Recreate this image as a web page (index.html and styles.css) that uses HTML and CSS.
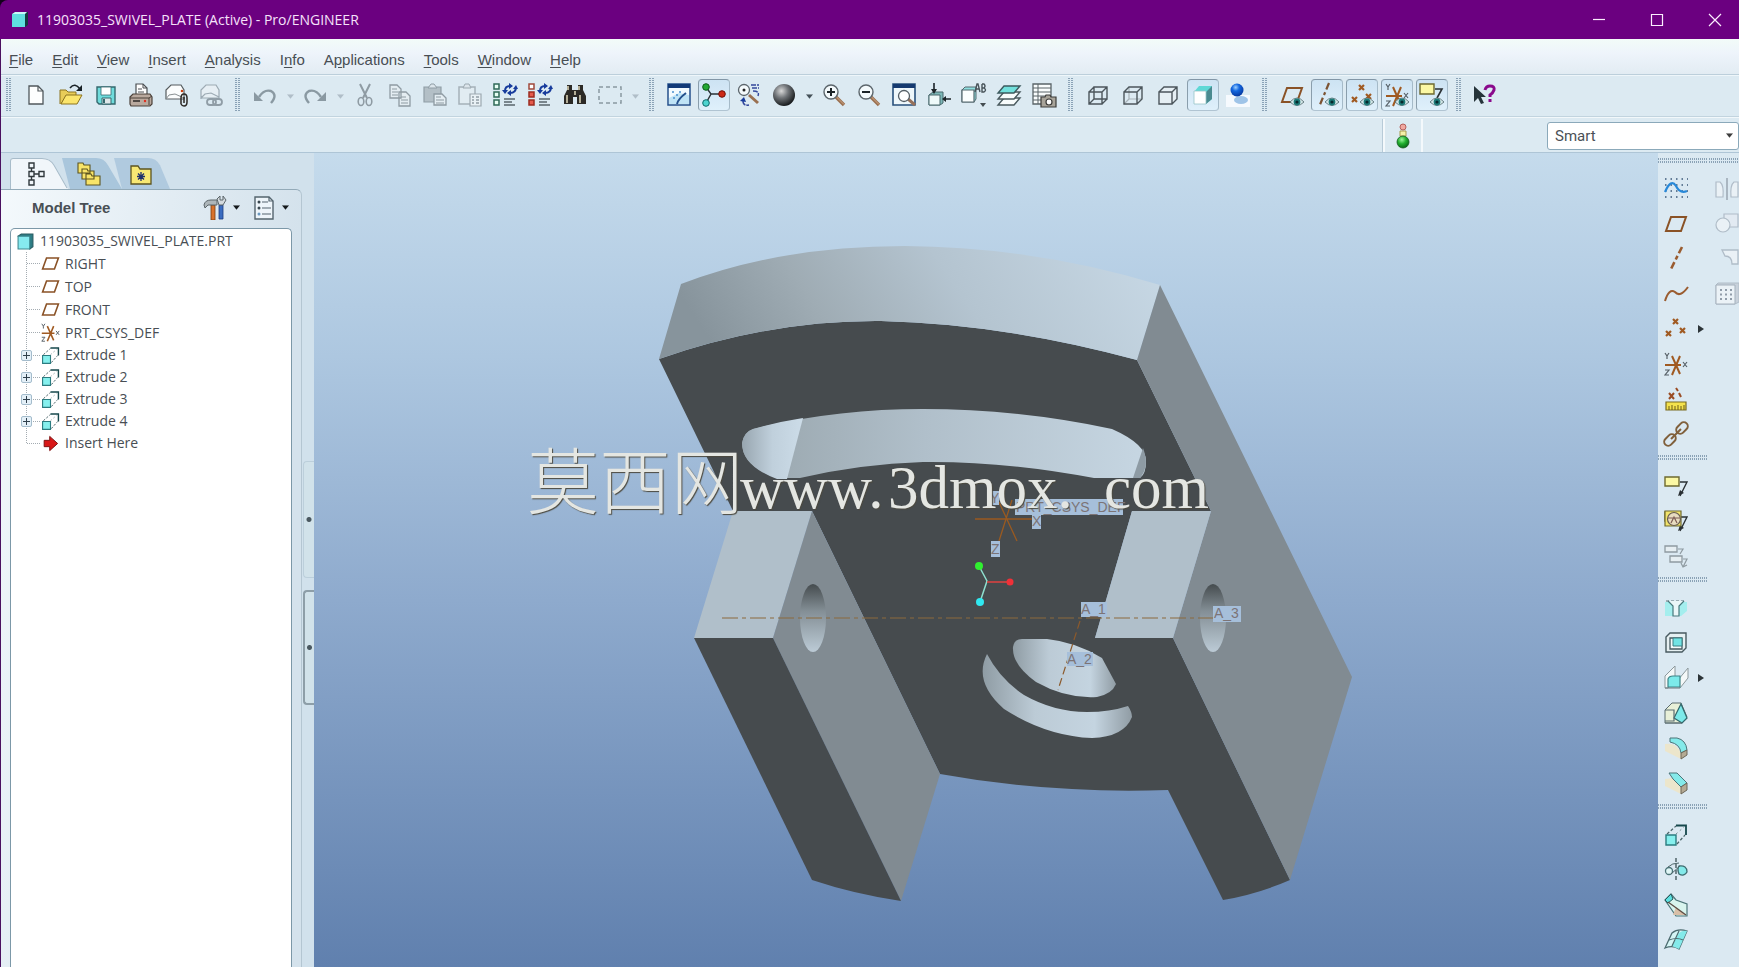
FILE: index.html
```html
<!DOCTYPE html>
<html lang="en">
<head>
<meta charset="utf-8">
<title>11903035_SWIVEL_PLATE (Active) - Pro/ENGINEER</title>
<link rel="stylesheet" href="styles.css">
</head>
<body>
<svg class="defs" aria-hidden="true">
  <defs>
    <radialGradient id="ball" cx=".38" cy=".32" r=".7"><stop offset="0" stop-color="#d8d8d8"/><stop offset=".45" stop-color="#707478"/><stop offset="1" stop-color="#15181a"/></radialGradient>
    <radialGradient id="blueball" cx=".4" cy=".3" r=".7"><stop offset="0" stop-color="#9cd0ff"/><stop offset=".4" stop-color="#1468e0"/><stop offset="1" stop-color="#0538a0"/></radialGradient>
    <radialGradient id="greenball" cx=".4" cy=".3" r=".7"><stop offset="0" stop-color="#9af79a"/><stop offset=".5" stop-color="#22b030"/><stop offset="1" stop-color="#0a6a18"/></radialGradient>
  </defs>
  <symbol id="eye" viewBox="0 0 14 10"><path d="M0 5Q7-3 14 5Q7 12 0 5Z" fill="#d6e8ea" stroke="#4c6468" stroke-width=".8"/><circle cx="7" cy="5" r="3.4" fill="#1c7a78"/><circle cx="7" cy="5" r="1.6" fill="#06282c"/></symbol>
  <symbol id="plane" viewBox="0 0 24 24"><path d="M7 5H22L17 19H2Z" fill="none" stroke="#8a5226" stroke-width="2"/></symbol>
  <symbol id="csys" viewBox="0 0 24 24"><path d="M1 13H17M8 23L16 4M8 4L16 22" stroke="#a05a22" stroke-width="2" fill="none"/><path d="M1 1L3 4L5 1M3 4V7M19 10L23 15M23 10L19 15M1 18H5L1 23H5" stroke="#555f66" stroke-width="1.2" fill="none"/></symbol>
  <symbol id="points" viewBox="0 0 24 24"><path d="M9 2L14 7M14 2L9 7M2 14L7 19M7 14L2 19M16 11L21 16M21 11L16 16" stroke="#a05a22" stroke-width="2.2" fill="none"/></symbol>
  <symbol id="extrude" viewBox="0 0 24 24"><path d="M2 12H12V22H2Z" fill="#86f0ee" stroke="#2b7c80" stroke-width="1.4"/><path d="M3 11L12 3M13 21L21 12" stroke="#4a6468" stroke-width="1.2" stroke-dasharray="3 2" fill="none"/><path d="M12 11L20 4" stroke="#7a9094" stroke-dasharray="2 3"/><path d="M12 2.500H22V12" fill="none" stroke="#16484c" stroke-width="1.8"/></symbol>
  <symbol id="caret" viewBox="0 0 10 6"><path d="M1 0H9L5 5Z" fill="currentColor"/></symbol>
  <symbol id="lens" viewBox="0 0 24 24"><path d="M14 14L22 22" stroke="#9a7050" stroke-width="3.4"/><path d="M14.500 14L22 21.500" stroke="#d2a888" stroke-width="1"/><circle cx="9" cy="9" r="7" fill="#f4fafc" stroke="#5c666c" stroke-width="1.4"/></symbol>
  <symbol id="note" viewBox="0 0 24 24"><path d="M1 3H15V12H1Z" fill="#fbf8a4" stroke="#6e6a30" stroke-width="1.4"/><path d="M16 8H23L16 22" fill="none" stroke="#2a3034" stroke-width="1.400"/><path d="M14 22L16 16L20 19Z" fill="#2a3034"/></symbol>
</svg>

<header class="titlebar">
  <svg class="app-icon" viewBox="0 0 16 16"><path d="M0 2L3 0H16V13L13 15H0Z" fill="#123c40"/><path d="M0 2L3 0H15L13 2Z" fill="#c8fafa"/><path d="M0 2H13V15H0Z" fill="#5fdfe0"/></svg>
  <h1 class="title">11903035_SWIVEL_PLATE (Active) - Pro/ENGINEER</h1>
  <div class="window-controls">
    <button aria-label="Minimize"><svg viewBox="0 0 12 12"><path d="M0 5.500H12"/></svg></button>
    <button aria-label="Maximize"><svg viewBox="0 0 12 12"><path d="M.5 .5H11.500V11.500H.5Z"/></svg></button>
    <button aria-label="Close"><svg viewBox="0 0 12 12"><path d="M0 0L12 12M12 0L0 12"/></svg></button>
  </div>
</header>

<div class="app">
<nav class="menubar" aria-label="Main menu">
  <button><u>F</u>ile</button><button><u>E</u>dit</button><button><u>V</u>iew</button><button><u>I</u>nsert</button><button><u>A</u>nalysis</button><button>I<u>n</u>fo</button><button>A<u>p</u>plications</button><button><u>T</u>ools</button><button><u>W</u>indow</button><button><u>H</u>elp</button>
</nav>

<div class="toolbar" role="toolbar" aria-label="Standard">
  <span class="grip first"></span>
  <div class="group">
    <button class="tool" aria-label="New"><svg viewBox="0 0 24 24"><path d="M5 3H14L19 8V21H5Z" fill="#fdfefe" stroke="#50585c" stroke-width="1.300"/><path d="M14 3V8H19" fill="none" stroke="#50585c" stroke-width="1.200"/></svg></button>
    <button class="tool" aria-label="Open"><svg viewBox="0 0 24 24"><path d="M1 21V7H7L9 9H17V13H7L2 21" fill="#e8cc58" stroke="#8d7420"/><path d="M2 21L7 12H23L18 21Z" fill="#fbe56c" stroke="#8d7420"/><path d="M11 5Q16-1 21 6" fill="none" stroke="#1a2226" stroke-width="1.600"/><path d="M23 2V8H17Z" fill="#1a2226"/></svg></button>
    <button class="tool" aria-label="Save"><svg viewBox="0 0 24 24"><path d="M3 4H21V21H5L3 19Z" fill="#6fdcdc" stroke="#35686e" stroke-width="1.400"/><path d="M7 4H17V12H7Z" fill="#fff" stroke="#35686e" stroke-width=".8"/><path d="M8 15H17V21H8Z" fill="#dfe8ea" stroke="#35686e"/><path d="M10 16V20" stroke="#35686e" stroke-width="2"/></svg></button>
    <button class="tool" aria-label="Print"><svg viewBox="0 0 24 24"><path d="M7 12V1H14L18 5V12" fill="#fff" stroke="#4a4f52" stroke-width="1.200"/><path d="M14 1V5H18M9 6H13M9 9H15" stroke="#4a4f52" fill="none"/><path d="M1 14L4 11H21L23 14V21L21 23H2L1 21Z" fill="#b9a99e" stroke="#4b4039" stroke-width="1.200"/><path d="M1 15H20V22M20 15L23 13" stroke="#4b4039" fill="none"/><path d="M4 18H11" stroke="#2e2a27" stroke-width="1.500"/><circle cx="16" cy="18" r="1.200" fill="#e03020"/></svg></button>
    <button class="tool" aria-label="Send attachment"><svg viewBox="0 0 24 24"><path d="M2 16V7L7 2H17L20 7V16Z" fill="#fbfdfd" stroke="#555b5e" stroke-width="1.200"/><path d="M2 16L5 12L11 11L20 15" fill="none" stroke="#888f92"/><circle cx="18" cy="8" r="1.300" fill="#d04010"/><path d="M17 21V15Q17 11 20 11Q23 11 23 15V19Q23 23 20 23Q18 23 17 21M20 14V20" fill="none" stroke="#2c2824" stroke-width="1.500"/></svg></button>
    <button class="tool off" aria-label="Send link"><svg viewBox="0 0 24 24"><path d="M2 16V7L7 2H17L20 7V15H2M2 15L6 11L12 10L20 14" fill="#eaf1f5" stroke="#8e9ba4" stroke-width="1.200"/><rect x="8" y="16" width="9" height="6" rx="3" fill="none" stroke="#7e8b94" stroke-width="1.800"/><rect x="14" y="16" width="9" height="6" rx="3" fill="none" stroke="#7e8b94" stroke-width="1.800"/></svg></button>
  </div>
  <span class="grip"></span>
  <div class="group">
    <button class="tool off" aria-label="Undo"><svg viewBox="0 0 24 24"><path d="M6 14Q11 6 18 8Q25 12 18 20" fill="none" stroke="#76868f" stroke-width="2.400"/><path d="M1 9V18H10Z" fill="#76868f"/></svg></button>
    <button class="drop off" aria-label="Undo list"><svg viewBox="0 0 10 6"><use href="#caret"/></svg></button>
    <button class="tool off" aria-label="Redo"><svg viewBox="0 0 24 24"><path d="M18 14Q13 6 6 8Q-1 12 6 20" fill="none" stroke="#76868f" stroke-width="2.400"/><path d="M23 9V18H14Z" fill="#76868f"/></svg></button>
    <button class="drop off" aria-label="Redo list"><svg viewBox="0 0 10 6"><use href="#caret"/></svg></button>
    <button class="tool off" aria-label="Cut"><svg viewBox="0 0 24 24"><path d="M7 1L14 15M17 1L10 15" stroke="#7c8890" stroke-width="2"/><ellipse cx="8" cy="18.500" rx="2.800" ry="4" fill="none" stroke="#7c8890" stroke-width="1.600"/><ellipse cx="16" cy="18.500" rx="2.800" ry="4" fill="none" stroke="#7c8890" stroke-width="1.600"/></svg></button>
    <button class="tool off" aria-label="Copy"><svg viewBox="0 0 24 24"><path d="M2 2H9L13 6V15H2ZM11 9H18L22 13V23H11Z" fill="#e6eef2" stroke="#7c8890" stroke-width="1.300"/><path d="M4 6H9M4 9H10M4 12H10M13 14H18M13 17H20M13 20H20" stroke="#7c8890"/></svg></button>
    <button class="tool off" aria-label="Paste"><svg viewBox="0 0 24 24"><path d="M1 4H18V19H1Z" fill="#a9b5bc" stroke="#7f8c94" stroke-width="1.200"/><path d="M5 5L8 1H11L14 5Z" fill="#dce5ea" stroke="#7f8c94"/><path d="M11 11H19L23 15V22H11Z" fill="#e6eef2" stroke="#7c8890" stroke-width="1.300"/><path d="M13 14H18M13 17H21M13 20H21" stroke="#7c8890"/></svg></button>
    <button class="tool off" aria-label="Paste special"><svg viewBox="0 0 24 24"><path d="M1 4H17V21H1Z" fill="#e3edf2" stroke="#98a4ac" stroke-width="1.500"/><path d="M5 5L7 1H11L13 5Z" fill="#dce5ea" stroke="#8d99a1"/><path d="M12 11H23V23H12Z" fill="#edf3f6" stroke="#8d99a1" stroke-width="1.200"/><path d="M14 14H16M14 17H16M14 20H16M18 14H21M18 17H21M18 20H21" stroke="#7f8c94" stroke-width="1.400"/></svg></button>
    <button class="tool" aria-label="Regenerate"><svg viewBox="0 0 24 24"><path d="M1 1H6V6H1ZM1 9H6V14H1ZM1 17H6V22H1Z" fill="#e8fff4" stroke="#2f6a58" stroke-width="1.500"/><path d="M12 8Q12 3 17 3M23 4Q23 10 17 10" fill="none" stroke="#173b9c" stroke-width="2"/><path d="M16 0V6L20 3ZM18 7V13L14 10Z" fill="#173b9c"/><path d="M9 7L12 11L15 7ZM20 6L23 2L25 6Z" fill="#173b9c"/><path d="M11 16H22M11 19H19M11 22H22" stroke="#5a666c" stroke-width="1.300"/></svg></button>
    <button class="tool" aria-label="Regenerate manager"><svg viewBox="0 0 24 24"><path d="M1 1H6V6H1Z" fill="#fff" stroke="#a04a3c" stroke-width="1.500"/><path d="M1 9H6V14H1ZM1 17H6V22H1Z" fill="#e65a4c" stroke="#9c2c20" stroke-width="1.500"/><path d="M12 8Q12 3 17 3M23 4Q23 10 17 10" fill="none" stroke="#173b9c" stroke-width="2"/><path d="M16 0V6L20 3ZM18 7V13L14 10Z" fill="#173b9c"/><path d="M9 7L12 11L15 7ZM20 6L23 2L25 6Z" fill="#173b9c"/><path d="M11 16H22M11 19H19M11 22H22" stroke="#5a666c" stroke-width="1.300"/></svg></button>
    <button class="tool" aria-label="Find"><svg viewBox="0 0 24 24"><path d="M4 2H9V7H15V2H20V7L23 13V21H14V14H10V21H1V13L4 7Z" fill="#2c2a26"/><path d="M5 3V7M16 3V7M4 12V20M17 12V20M12 8V12" stroke="#d8d0b4" stroke-width="1.600"/></svg></button>
    <button class="tool off" aria-label="Select box"><svg viewBox="0 0 24 24"><path d="M1 4H23V20H1Z" fill="none" stroke="#74848c" stroke-width="1.500" stroke-dasharray="4 3"/></svg></button>
    <button class="drop off" aria-label="Select options"><svg viewBox="0 0 10 6"><use href="#caret"/></svg></button>
  </div>
  <span class="grip"></span>
  <div class="group">
    <button class="tool" aria-label="Repaint"><svg viewBox="0 0 24 24"><path d="M1 1H23V22H1Z" fill="#f2faff" stroke="#24508c" stroke-width="1.500"/><path d="M1 1H23V5H1Z" fill="#123a78"/><path d="M2 21V15L12 10L22 12V21Z" fill="#bfe3f6"/><path d="M5 9H7M9 12H11M6 15H8M12 9H14" stroke="#4a90d0" stroke-width="1.500"/><path d="M10 21Q11 16 19 10" stroke="#24508c" stroke-width="2" fill="none"/></svg></button>
    <button class="tool on" aria-label="Spin center" aria-pressed="true"><svg viewBox="0 0 24 24"><path d="M4 4L9 11L4 20M9 11H20" fill="none" stroke="#2a3236" stroke-width="1.400"/><circle cx="4" cy="4" r="3.300" fill="#22a834" stroke="#0c5c1a"/><circle cx="20" cy="11" r="3.300" fill="#cc2a18" stroke="#701008"/><circle cx="4" cy="20" r="3.300" fill="#4cd4d0" stroke="#0c6a6c"/></svg></button>
    <button class="tool" aria-label="Orient mode"><svg viewBox="0 0 24 24"><path d="M12 12L21 20" stroke="#9a7050" stroke-width="3"/><circle cx="7" cy="7" r="5.500" fill="#f4fafc" stroke="#5c666c" stroke-width="1.300"/><circle cx="7" cy="7" r="1.500" fill="#222"/><path d="M14 2H22M15 5H22M16 8Q23 8 21 13M6 18Q6 23 12 22" stroke="#34489c" stroke-width="1.500" fill="none" stroke-dasharray="5 1"/><path d="M3 18L7 14L9 19Z" fill="#173b9c"/></svg></button>
    <button class="tool" aria-label="Appearance"><svg viewBox="0 0 24 24"><circle cx="12" cy="12" r="11" fill="url(#ball)"/></svg></button>
    <button class="drop" aria-label="Appearance gallery"><svg viewBox="0 0 10 6"><use href="#caret"/></svg></button>
    <button class="tool" aria-label="Zoom in"><svg viewBox="0 0 24 24"><use href="#lens"/><path d="M5 9H13M9 5V13" stroke="#1c2428" stroke-width="2"/></svg></button>
    <button class="tool" aria-label="Zoom out"><svg viewBox="0 0 24 24"><use href="#lens"/><path d="M5 9H13" stroke="#1c2428" stroke-width="2"/></svg></button>
    <button class="tool" aria-label="Refit"><svg viewBox="0 0 24 24"><path d="M1 1H23V22H1Z" fill="#eef7fb" stroke="#28507c" stroke-width="1.600"/><path d="M1 1H23V5H1Z" fill="#153a70"/><path d="M16 16L23 22" stroke="#96705a" stroke-width="3"/><circle cx="12" cy="13" r="5.500" fill="#fff" stroke="#555f66" stroke-width="1.300"/></svg></button>
    <button class="tool" aria-label="Reorient"><svg viewBox="0 0 24 24"><path d="M2 12L6 9H16V20L13 22H2Z" fill="#7cb8b8" stroke="#48686c"/><path d="M2 12H13V22H2Z" fill="#eefafa" stroke="#48686c"/><path d="M7 0V8M24 16H17" stroke="#1c2428" stroke-width="1.600"/><path d="M4 6H10L7 11ZM19 13V19L15 16Z" fill="#1c2428"/></svg></button>
    <button class="tool" aria-label="Saved view list"><svg viewBox="0 0 24 24"><path d="M0 7L3 4H14V16L12 19H0Z" fill="#8edede" stroke="#54686e"/><path d="M0 7H12V19H0Z" fill="#fbfefe" stroke="#54686e" stroke-width="1.200"/><path d="M13 9L15 1H16L18 9M14 6H17M20 1H22Q24 3 22 5H20V1M20 5H22Q25 7 22 9H20V5" fill="none" stroke="#48545a" stroke-width="1.400"/><path d="M18 20H24L21 24Z" fill="#444c50"/></svg></button>
    <button class="tool" aria-label="Layers"><svg viewBox="0 0 24 24"><path d="M7 15H23L17 22H1Z" fill="#f8fcfc" stroke="#4a5a5e" stroke-width="1.400"/><path d="M7 9H23L17 16H1Z" fill="#f8fcfc" stroke="#4a5a5e" stroke-width="1.400"/><path d="M7 3H23L17 10H1Z" fill="#72e0dc" stroke="#3c5a5e" stroke-width="1.400"/></svg></button>
    <button class="tool" aria-label="View manager"><svg viewBox="0 0 24 24"><path d="M1 1H19V21H1Z" fill="#fafdfd" stroke="#5a6468" stroke-width="1.300"/><path d="M6 1V21M1 5H19M1 9H19M1 13H19M1 17H19" stroke="#5a6468"/><path d="M9 14H13L14 12H18L19 14H24V24H9Z" fill="#a8a49a" stroke="#3c3c3a" stroke-width="1.200"/><circle cx="17" cy="19" r="3" fill="#fff" stroke="#3c3c3a" stroke-width="1.200"/></svg></button>
  </div>
  <span class="grip"></span>
  <div class="group">
    <button class="tool" aria-label="Wireframe"><svg viewBox="0 0 24 24"><path d="M3 9H16V21H3ZM8 4H21V16H8ZM3 9L8 4M16 9L21 4M16 21L21 16M3 21L8 16" fill="none" stroke="#4c565c" stroke-width="1.400"/></svg></button>
    <button class="tool" aria-label="Hidden line"><svg viewBox="0 0 24 24"><path d="M8 4V16H21M3 21L8 16" fill="none" stroke="#a8b2b8" stroke-width="1.200"/><path d="M3 9H16V21H3ZM3 9L8 4H21V16L16 21M16 9L21 4" fill="none" stroke="#4c565c" stroke-width="1.400"/></svg></button>
    <button class="tool" aria-label="No hidden"><svg viewBox="0 0 24 24"><path d="M3 9H16V21H3ZM3 9L8 4H21V16L16 21M16 9L21 4" fill="#e6eff4" stroke="#4c565c" stroke-width="1.400"/></svg></button>
    <button class="tool on" aria-label="Shading" aria-pressed="true"><svg viewBox="0 0 24 24"><path d="M3 9L8 3H21V16L15 21Z" fill="#5ed8d6"/><path d="M15 9L21 3V16L15 21Z" fill="#4a8a90"/><path d="M3 8H15V21H3Z" fill="#fff" stroke="#98c4c8" stroke-width=".8"/></svg></button>
    <button class="tool" aria-label="Enhanced realism"><svg viewBox="0 0 24 24"><path d="M0 12H24V24H0Z" fill="#f6fafe"/><ellipse cx="15" cy="17" rx="7" ry="4" fill="#9fc4e8"/><circle cx="11" cy="7" r="6.500" fill="url(#blueball)"/></svg></button>
  </div>
  <span class="grip"></span>
  <div class="group">
    <button class="tool" aria-label="Plane display"><svg viewBox="0 0 24 24"><use href="#plane"/><use href="#eye" x="10" y="14" width="14" height="10"/></svg></button>
    <button class="tool on" aria-label="Axis display" aria-pressed="true"><svg viewBox="0 0 24 24"><path d="M14 0L4 24" stroke="#7c5434" stroke-width="2.200" stroke-dasharray="7 3 3 3"/><use href="#eye" x="10" y="14" width="14" height="10"/></svg></button>
    <button class="tool on" aria-label="Point display" aria-pressed="true"><svg viewBox="0 0 24 24"><use href="#points"/><use href="#eye" x="10" y="14" width="14" height="10"/></svg></button>
    <button class="tool on" aria-label="Csys display" aria-pressed="true"><svg viewBox="0 0 24 24"><use href="#csys"/><use href="#eye" x="10" y="14" width="14" height="10"/></svg></button>
    <button class="tool on" aria-label="Annotation display" aria-pressed="true"><svg viewBox="0 0 24 24"><path d="M0 1H14V11H0Z" fill="#fbf8a4" stroke="#6e6a30" stroke-width="1.400"/><path d="M15 6H22L17 15" fill="none" stroke="#2a3034" stroke-width="1.600"/><use href="#eye" x="10" y="14" width="14" height="10"/></svg></button>
  </div>
  <span class="grip"></span>
  <div class="group">
    <button class="tool" aria-label="Context help"><svg viewBox="0 0 24 24"><path d="M0 3V19L4 15L7 21L10 20L7 14H12Z" fill="#26343a"/><path d="M11 7Q12 3 16 3Q21 3 20 7Q19 10 16 12V14" fill="none" stroke="#8a0a8c" stroke-width="3"/><path d="M14.500 16H17.500V19H14.500Z" fill="#8a0a8c"/></svg></button>
  </div>
</div>

<div class="statusbar">
  <div class="light"><svg viewBox="0 0 14 26" role="img" aria-label="Regeneration status: green"><circle cx="7" cy="4" r="3" fill="#f0a8a0" stroke="#b4605c"/><path d="M4 8H10V13H4Z" fill="#f4f0a8" stroke="#a89c50"/><circle cx="7" cy="19" r="6" fill="url(#greenball)" stroke="#145c20" stroke-width=".8"/></svg></div>
  <div class="filter">
    <select aria-label="Selection filter"><option>Smart</option></select>
    <svg viewBox="0 0 10 6"><use href="#caret"/></svg>
  </div>
</div>

<main class="workspace">
  <aside class="navigator">
    <div class="tabs" role="tablist">
      <button class="tab tab-active" role="tab" aria-selected="true" aria-label="Model tree">
        <svg class="tab-shape" viewBox="0 0 62 30" preserveAspectRatio="none"><path d="M0 30V3Q0 0 3 0H32Q40 0 44 7L58 30Z" fill="#f1f6fa"/><path d="M.5 30V3Q.5 .5 3 .5H32Q40 .5 44 7L57 29" fill="none" stroke="#a8bcca"/></svg>
        <svg class="tab-icon" viewBox="0 0 24 24"><path d="M4 1H9V6H4ZM4 9.500H9V14.500H4ZM4 18H9V23H4ZM14 9.500H19V14.500H14ZM6.500 6V9M6.500 15V18M9 12H14" fill="none" stroke="#30383c" stroke-width="1.400"/></svg>
      </button>
      <button class="tab" role="tab" aria-label="Folder browser">
        <svg class="tab-shape" viewBox="0 0 62 30" preserveAspectRatio="none"><path d="M0 0H34Q42 0 46 7L60 30H8Z" fill="#a9c6dc"/></svg>
        <svg class="tab-icon" viewBox="0 0 24 24"><path d="M1 3V1H6L7 3H13V11H1ZM5 9V7H10L11 9H17V17H5ZM9 14V12H14L15 14H23V23H9Z" fill="#f8e468" stroke="#5c5420" stroke-width="1.100"/></svg>
      </button>
      <button class="tab" role="tab" aria-label="Favorites">
        <svg class="tab-shape" viewBox="0 0 62 30" preserveAspectRatio="none"><path d="M0 0H34Q42 0 46 7L56 30H8Z" fill="#b0cadf"/></svg>
        <svg class="tab-icon" viewBox="0 0 24 24"><path d="M2 7V4H9L11 7H22V22H2Z" fill="#f8e874" stroke="#5c5420" stroke-width="1.300"/><path d="M12 10V19M8 14.500H16M9 11.500L15 17.500M15 11.500L9 17.500" stroke="#20306c" stroke-width="1.300"/></svg>
      </button>
    </div>
    <section class="panel">
      <div class="panel-head">
        <h2>Model Tree</h2>
        <button class="panel-btn" aria-label="Settings"><svg class="ico" viewBox="0 0 24 24"><path d="M8 9H12V24H8Z" fill="#d8722c" stroke="#7c3c10" stroke-width=".8"/><path d="M1 9Q2 4 8 4H14V9H5L2 12Z" fill="#aeb6ba" stroke="#5c666a"/><path d="M16 9H20V23H16Z" fill="#3a6cc0" stroke="#1c3c80" stroke-width=".8"/><path d="M14 3L17 0V4H20V0L23 4L20 9H16Z" fill="#d4dade" stroke="#5c666a"/></svg><svg class="arr" viewBox="0 0 10 6"><use href="#caret"/></svg></button>
        <button class="panel-btn" aria-label="Show"><svg class="ico" viewBox="0 0 24 24"><path d="M3 1H17L21 5V23H3Z" fill="#eef5fa" stroke="#54646e" stroke-width="1.400"/><path d="M17 1V5H21M10 6H16M10 12H19M10 18H19" fill="none" stroke="#54646e" stroke-width="1.200"/><circle cx="7" cy="6" r="1.500" fill="#38464e"/><circle cx="7" cy="12" r="1.500" fill="#38464e"/><circle cx="7" cy="18" r="1.500" fill="#6a98c0"/></svg><svg class="arr" viewBox="0 0 10 6"><use href="#caret"/></svg></button>
      </div>
      <div class="tree">
        <div class="root"><svg viewBox="0 0 16 16"><path d="M1 3L4 1H15V13L12 15Z" fill="#2c7c84" stroke="#2a5c62"/><path d="M1 3H12V15H1Z" fill="#86eaf0" stroke="#3c8890"/></svg><span>11903035_SWIVEL_PLATE.PRT</span></div>
        <ul>
          <li class="datum"><svg viewBox="0 0 24 24"><use href="#plane"/></svg><span>RIGHT</span></li>
          <li class="datum"><svg viewBox="0 0 24 24"><use href="#plane"/></svg><span>TOP</span></li>
          <li class="datum"><svg viewBox="0 0 24 24"><use href="#plane"/></svg><span>FRONT</span></li>
          <li class="datum"><svg viewBox="0 0 24 24"><use href="#csys"/></svg><span>PRT_CSYS_DEF</span></li>
          <li><button class="toggle" aria-label="Expand Extrude 1"></button><svg viewBox="0 0 24 24"><use href="#extrude"/></svg><span>Extrude 1</span></li>
          <li><button class="toggle" aria-label="Expand Extrude 2"></button><svg viewBox="0 0 24 24"><use href="#extrude"/></svg><span>Extrude 2</span></li>
          <li><button class="toggle" aria-label="Expand Extrude 3"></button><svg viewBox="0 0 24 24"><use href="#extrude"/></svg><span>Extrude 3</span></li>
          <li><button class="toggle" aria-label="Expand Extrude 4"></button><svg viewBox="0 0 24 24"><use href="#extrude"/></svg><span>Extrude 4</span></li>
          <li><svg viewBox="0 0 24 24"><path d="M4 8H11V3L21 12L11 21V16H4Z" fill="#d81818" stroke="#7a1010" stroke-width="1.200"/></svg><span>Insert Here</span></li>
        </ul>
      </div>
    </section>
    <div class="sashes"><button class="sash" aria-label="Browser sash"></button><button class="sash sash-strong" aria-label="Navigator sash"></button></div>
  </aside>

  <section class="viewport" aria-label="Graphics window">
    <svg class="scene" viewBox="314 153 1344 814" preserveAspectRatio="xMidYMin slice">
      <defs>
        <linearGradient id="rim" x1="0" x2="1" y1=".15" y2="0"><stop offset="0" stop-color="#87949c"/><stop offset=".25" stop-color="#9facb4"/><stop offset=".55" stop-color="#b4c4d0"/><stop offset="1" stop-color="#c8d9e6"/></linearGradient>
        <linearGradient id="slot" x1="0" x2="1"><stop offset="0" stop-color="#98a5ac"/><stop offset=".45" stop-color="#b0bfca"/><stop offset="1" stop-color="#c6d6e2"/></linearGradient>
        <linearGradient id="slotL" x1="0" x2="1"><stop offset="0" stop-color="#98a6b0"/><stop offset=".5" stop-color="#c0d0dc"/><stop offset="1" stop-color="#ccdce8"/></linearGradient>
        <linearGradient id="hole" x1="0" x2="0" y1="0" y2="1"><stop offset="0" stop-color="#454b4e"/><stop offset=".4" stop-color="#848f96"/><stop offset="1" stop-color="#bccbd6"/></linearGradient>
        <linearGradient id="bore" x1="0" x2="1"><stop offset="0" stop-color="#8f9ca4"/><stop offset=".35" stop-color="#bccbd6"/><stop offset=".75" stop-color="#c4d4e0"/><stop offset="1" stop-color="#909ca4"/></linearGradient>
      </defs>
      <path fill="#464b4e" d="M659 359Q770 320 881 321Q1005 324 1137 360L1211 511L1132 511L1095 638H1173L1290 880Q1258 894 1223 900L1168 790Q1050 794 940 774L812 511H733Z"/>
      <path fill="url(#rim)" d="M681 284Q780 246 905 246Q1035 247 1160 285L1137 360Q1005 324 881 321Q770 320 659 359Z"/>
      <path fill="#818b92" d="M1160 285L1352 677L1290 880L1173 638L1211 511L1137 360Z"/>
      <path fill="#b0bfca" d="M1132 511H1211L1173 638H1095ZM733 511H812L773 638H694Z"/>
      <path fill="#818b92" d="M812 511L940 774L901 901L773 638Z"/>
      <path fill="#464b4e" d="M694 638H773L901 901Q854 894 812 880Z"/>
      <path fill="url(#slot)" d="M742 443Q744 432 753 429Q835 409 923 409Q1018 409 1112 429Q1146 444 1146 461Q1146 474 1140 478H1094Q1005 461 923 462Q860 464 800 478H777Q742 466 742 443Z"/>
      <path fill="url(#slotL)" d="M742 443Q744 432 753 429Q777 422 803 418L787 479H777Q742 466 742 443Z"/>
      <path fill="#8e9ba4" d="M1143 448Q1150 466 1140 478H1133Z"/>
      <ellipse cx="813" cy="618" rx="13" ry="34" fill="url(#hole)"/>
      <ellipse cx="1213" cy="618" rx="13" ry="34" fill="url(#hole)"/>
      <path fill="url(#bore)" d="M1013 647Q1014 639 1022 639H1047Q1076 642 1102 658L1116 684Q1112 694 1097 697Q1066 699 1036 682Q1012 665 1013 647Z"/>
      <path fill="url(#bore)" d="M987 654Q1000 679 1024 695Q1054 712 1087 712Q1110 712 1128 706Q1132 712 1132 717Q1124 737 1092 738Q1046 736 1004 709Q973 682 987 654Z"/>
      <path stroke="#8c6a3c" stroke-width="1.200" stroke-dasharray="16 4 4 4" d="M722 618H1213"/>
      <path stroke="#8c5a2c" stroke-width="1.200" stroke-dasharray="8 4" d="M1080 621L1058 690"/>
      <path stroke="#9a5a20" stroke-width="1.300" fill="none" d="M975 519H1033M999 502L1017 541M1012 500L999 541"/>
      <path class="tag-box" d="M1015 499H1123V515H1015ZM1032 514H1041V529H1032ZM991 541H1000V557H991ZM990 491H999V505H990ZM1081 602H1107V617H1081ZM1067 652H1093V666H1067ZM1213 606H1241V622H1213Z"/>
      <g class="tag">
        <text x="1016" y="512">PRT_CSYS_DEF</text><text x="1032" y="526">X</text><text x="991" y="554">Z</text><text x="990" y="503">Y</text>
        <text x="1081" y="614">A_1</text><text x="1067" y="664">A_2</text><text x="1214" y="618">A_3</text>
      </g>
      <path d="M979 566L987 581L980 602" fill="none" stroke="#8fe0d0" stroke-width="1.500"/><path d="M987 582H1010" stroke="#e04040" stroke-width="1.500"/>
      <circle cx="979" cy="566" r="4" fill="#30f030"/><circle cx="1010" cy="582" r="3.500" fill="#f03038"/><circle cx="980" cy="602" r="4" fill="#30e8f0"/>
      <text class="watermark" x="527" y="508"><tspan class="watermark-cjk">莫西网</tspan><tspan x="740">www. </tspan><tspan x="888">3dmox. </tspan><tspan x="1104">com</tspan></text>
    </svg>
  </section>

  <aside class="features" aria-label="Feature toolbar">
    <div class="col">
      <span class="hgrip"></span>
      <div class="stack">
        <button class="tool" aria-label="Sketch"><svg viewBox="0 0 24 24"><path d="M1 2H24M1 8H24M1 14H24M1 20H24" stroke="#3c5878" stroke-width="1.400" stroke-dasharray="1.500 4"/><path d="M1 15Q7 1 12 9Q16 17 23 14" fill="none" stroke="#2888d8" stroke-width="2.200"/></svg></button>
        <button class="tool" aria-label="Datum plane"><svg viewBox="0 0 24 24"><use href="#plane"/></svg></button>
        <button class="tool" aria-label="Datum axis"><svg viewBox="0 0 24 24"><path d="M18 0L6 24" stroke="#9a5c30" stroke-width="2.600" stroke-dasharray="7 3 4 3"/></svg></button>
        <button class="tool" aria-label="Datum curve"><svg viewBox="0 0 24 24"><path d="M1 19Q5 6 11 10Q16 16 24 5" fill="none" stroke="#9a5c30" stroke-width="2"/></svg></button>
        <div class="with-flyout"><button class="tool" aria-label="Datum point"><svg viewBox="0 0 24 24"><use href="#points"/></svg></button><button class="flyout" aria-label="More datum points"></button></div>
        <button class="tool" aria-label="Datum csys"><svg viewBox="0 0 24 24"><use href="#csys"/></svg></button>
        <button class="tool" aria-label="Analysis feature"><svg viewBox="0 0 24 24"><path d="M5 6L10 12M10 6L5 12M12 1L14 4M15 6L17 10" stroke="#9a4c24" stroke-width="2"/><path d="M2 15H22V23H2Z" fill="#f4e24c" stroke="#7a6c20" stroke-width="1.200"/><path d="M5 19V23M8 18V23M11 19V23M14 18V23M17 19V23M20 18V23" stroke="#6a5c18"/></svg></button>
        <button class="tool" aria-label="Reference feature"><svg viewBox="0 0 24 24"><g fill="none" stroke="#80603c" stroke-width="2" transform="rotate(-45 12 12)"><rect x="-3" y="8" width="13" height="8" rx="4"/><rect x="14" y="8" width="13" height="8" rx="4"/><path d="M5 12H19"/></g></svg></button>
      </div>
      <span class="hgrip"></span>
      <div class="stack">
        <button class="tool" aria-label="Annotation feature"><svg viewBox="0 0 24 24"><use href="#note"/></svg></button>
        <button class="tool" aria-label="Datum target"><svg viewBox="0 0 24 24"><use href="#note"/><path d="M1 2H17V17H1Z" fill="#f2e46c" stroke="#6e6a30" stroke-width="1.200"/><circle cx="10" cy="10" r="6.500" fill="#e8dcc0" stroke="#665c50" stroke-width="1.200"/><path d="M4 9H16M7 14L10 8L13 14" stroke="#7c5c54" fill="none" stroke-width="1.200"/></svg></button>
        <button class="tool off" aria-label="Propagate annotation"><svg viewBox="0 0 24 24"><path d="M1 2H13V8H1ZM6 12H18V18H6Z" fill="#e9f0f3" stroke="#7c878d" stroke-width="1.300"/><path d="M14 5H19L16 10M19 15H23L19 23M17 19L19 23L23 21" fill="none" stroke="#7c878d" stroke-width="1.200"/></svg></button>
      </div>
      <span class="hgrip"></span>
      <div class="stack">
        <button class="tool" aria-label="Hole"><svg viewBox="0 0 24 24"><path d="M1 6H5L9 10V20H15V10L19 6H23V15L17 20H1Z" fill="#a4eeee"/><path d="M2 5H22" stroke="#5a7074" stroke-dasharray="3 2"/><path d="M4 5L9 10V20H15V10L20 5" fill="#eaf6f8" stroke="#48787c" stroke-width="1.200"/></svg></button>
        <button class="tool" aria-label="Shell"><svg viewBox="0 0 24 24"><path d="M2 6L6 2H22V17L18 21H2Z" fill="#e6f0f2" stroke="#485a60" stroke-width="1.400"/><path d="M6 7H18V18H6Z" fill="#f4fafa" stroke="#485a60" stroke-width="1.300"/><path d="M9 7H18V15H9Z" fill="#72e4e4" stroke="#3c8084"/></svg></button>
        <div class="with-flyout"><button class="tool" aria-label="Rib"><svg viewBox="0 0 24 24"><path d="M1 10L11 0V12L4 22H1ZM14 14L24 2V12L16 22Z" fill="#f4f8f8" stroke="#8c989c"/><path d="M4 21V13Q5 10 9 10H16V21Z" fill="#7ceaea" stroke="#3c8488" stroke-width="1.200"/><path d="M1 22H16" stroke="#6a787c"/></svg></button><button class="flyout" aria-label="More ribs"></button></div>
        <button class="tool" aria-label="Draft"><svg viewBox="0 0 24 24"><path d="M1 9L8 2H17L23 16L18 22H1Z" fill="#e8f0d8" stroke="#5a6c70"/><path d="M10 17L17 3L23 17L18 22Z" fill="#7ceaea" stroke="#32686c" stroke-width="1.200"/><path d="M1 9H10V20H1M1 22H18" fill="none" stroke="#5a6c70" stroke-width="1.200"/></svg></button>
        <button class="tool" aria-label="Round"><svg viewBox="0 0 24 24"><path d="M1 8Q12 6 17 17V23L1 15Z" fill="#ece6cc"/><path d="M6 2H13Q22 4 23 14L17 17Q16 8 6 6Z" fill="#84eaea" stroke="#4c7478"/><path d="M17 17L23 14V19L17 23Z" fill="#b4aa94" stroke="#6c6658"/></svg></button>
        <button class="tool" aria-label="Chamfer"><svg viewBox="0 0 24 24"><path d="M1 8L9 7L17 16V23L1 15Z" fill="#ece6cc"/><path d="M5 2H13L23 12L17 16L9 8Z" fill="#84eaea" stroke="#4c7478"/><path d="M17 16L23 12V19L17 23Z" fill="#b4aa94" stroke="#6c6658"/></svg></button>
      </div>
      <span class="hgrip"></span>
      <div class="stack">
        <button class="tool" aria-label="Extrude"><svg viewBox="0 0 24 24"><use href="#extrude"/></svg></button>
        <button class="tool" aria-label="Revolve"><svg viewBox="0 0 24 24"><path d="M12 0V24" stroke="#485a60" stroke-width="1.400" stroke-dasharray="4 2"/><circle cx="5" cy="13" r="3.500" fill="#dff6f6" stroke="#4c7478" stroke-width="1.300"/><path d="M15 8Q23 7 23 14Q20 19 15 16Q13 11 15 8Z" fill="#84eaea" stroke="#3c6c70" stroke-width="1.300"/><path d="M4 9Q8 5 15 5M7 16L16 8" fill="none" stroke="#4c6468"/></svg></button>
        <button class="tool" aria-label="Variable section sweep"><svg viewBox="0 0 24 24"><path d="M1 7L7 1L12 7L23 11V23H12Z" fill="#d8f4ee" stroke="#4c7478" stroke-width="1.200"/><path d="M1 7L7 1L9 6L4 10Z" fill="#5ce0e0" stroke="#28585c"/><path d="M12 14L22 22H9Z" fill="#d8bfa8"/><path d="M4 9L22 22" stroke="#5c4c44" stroke-width="1.300"/></svg></button>
        <button class="tool" aria-label="Boundary blend"><svg viewBox="0 0 24 24"><path d="M8 5Q14 0 23 3L15 21Q9 17 1 20Z" fill="#d4f4f4" stroke="#4c6c70" stroke-width="1.300"/><path d="M15 5Q19 2 23 3L15 21L8 18Z" fill="#84eaea"/><path d="M15 3L8 18M5 12Q13 9 19 12" fill="none" stroke="#4c6c70" stroke-width="1.200"/></svg></button>
      </div>
    </div>
    <div class="col">
      <span class="hgrip"></span>
      <div class="stack">
        <button class="tool off" aria-label="Mirror"><svg viewBox="0 0 24 24"><path d="M1 5H5Q9 8 8 20H1ZM23 5H19Q15 8 16 20H23Z" fill="#eef4f8" stroke="#a6b2be" stroke-width="1.200"/><path d="M12 1V23" stroke="#8e9aa6" stroke-width="1.600"/></svg></button>
        <button class="tool off" aria-label="Merge"><svg viewBox="0 0 24 24"><path d="M9 2H23V15H9Z" fill="#e4ebf2" stroke="#a6b2be" stroke-width="1.200"/><circle cx="8" cy="13" r="7" fill="#eef4f8" stroke="#a6b2be" stroke-width="1.200"/></svg></button>
        <button class="tool off" aria-label="Trim"><svg viewBox="0 0 24 24"><path d="M7 3H23V17H17Q17 9 10 9Z" fill="#eef4f8" stroke="#a6b2be" stroke-width="1.300"/></svg></button>
        <button class="tool off" aria-label="Pattern"><svg viewBox="0 0 24 24"><path d="M1 3L3 1H24V20L20 22H1Z" fill="#c4ccd6" stroke="#a6b2be"/><path d="M1 3H20V22H1Z" fill="#f0f5f9" stroke="#98a4b0"/><path d="M5 8H19M5 12.500H19M5 17H19" stroke="#7e8a98" stroke-width="2" stroke-dasharray="2 3"/></svg></button>
      </div>
    </div>
  </aside>
</main>
</div>
</body>
</html>
```

FILE: styles.css
```css
* { box-sizing: border-box; }

html, body { height: 100%; }

body {
  margin: 0;
  display: flex;
  flex-direction: column;
  overflow: hidden;
  background: #12001a;
  color: #484e54;
  font-family: "Liberation Sans", Arial, sans-serif;
  font-size: 15px;
}

button {
  border: 0;
  padding: 0;
  background: none;
  color: inherit;
  font: inherit;
}

.defs { position: absolute; width: 0; height: 0; }

/* Title bar */
.titlebar {
  flex: none;
  height: 39px;
  display: flex;
  align-items: center;
  padding-left: 12px;
  border-radius: 8px 0 0 0;
  background: #6b0080;
  color: #f6e2fa;
}
.app-icon { width: 16px; height: 16px; margin-right: 9px; }
.title {
  flex: 1;
  margin: 0;
  font: 400 14px/20px "Open Sans", "Noto Sans", sans-serif;
}
.window-controls { display: flex; }
.window-controls button {
  width: 58px;
  height: 39px;
  display: grid;
  place-items: center;
}
.window-controls button:last-child { width: 48px; margin-left: 5px; }
.window-controls svg {
  width: 12px;
  height: 12px;
  fill: none;
  stroke: #fbeefe;
  stroke-width: 1.2;
  overflow: visible;
}

.app {
  flex: 1;
  min-height: 0;
  display: flex;
  flex-direction: column;
  border-left: 1px solid #4a1060;
  background: #dceaf2;
}

/* Menu */
.menubar {
  flex: none;
  display: flex;
  gap: 19px;
  height: 35px;
  padding: 6px 8px 0;
  background: linear-gradient(#f2fbf8, #eef4fb 40%, #e2ecf3);
}
.menubar u { text-underline-offset: 2px; }

/* Toolbar */
.toolbar {
  flex: none;
  display: flex;
  align-items: center;
  height: 43px;
  padding-bottom: 2px;
  border-top: 1px solid #bccfdb;
  border-bottom: 1px solid #c2d4df;
  box-shadow: inset 0 1px #eef6fa;
  background: #dceaf2;
}
.group { display: flex; align-items: center; gap: 3px; }
.grip {
  width: 5px;
  height: 34px;
  margin: 0 9px 0 8px;
  background:
    linear-gradient(90deg, transparent 2px, #dceaf2 2px 3px, transparent 3px),
    repeating-linear-gradient(#8aa2b6 0 1px, #dceaf2 1px 2px);
}
.grip.first { margin-left: 5px; }
.tool {
  width: 32px;
  height: 32px;
  display: grid;
  place-items: center;
  border: 1px solid transparent;
  border-radius: 4px;
}
.tool svg { width: 24px; height: 24px; overflow: visible; }
.tool.on {
  border-color: #8296a6 #a5bac8 #b0c4d2 #8a9eac;
  background: linear-gradient(#cde3f3, #dff0fb);
}
.tool.off svg { opacity: .8; }
.drop { width: 12px; height: 32px; color: #445058; }
.drop svg { width: 9px; height: 6px; }
.drop.off { color: #b0bec8; }

/* Status row */
.statusbar {
  flex: none;
  display: flex;
  justify-content: flex-end;
  align-items: center;
  gap: 124px;
  height: 36px;
  padding-top: 1px;
  border-top: 1px solid #f2f8fb;
  border-bottom: 1px solid #aec5d6;
  background: #dceaf2;
}
.light {
  width: 40px;
  align-self: stretch;
  display: grid;
  place-items: center;
  border-left: 2px solid #f4f9fc;
  border-right: 2px solid #f4f9fc;
  box-shadow: -1px 0 #b8cbd8;
}
.light svg { width: 14px; height: 26px; }
.filter { position: relative; width: 192px; }
.filter select {
  display: block;
  width: 100%;
  height: 28px;
  padding: 0 7px;
  appearance: none;
  border: 1px solid #8ba9ba;
  border-radius: 3px;
  background: #fff;
  color: #4a5056;
  font: 15px Roboto, "Liberation Sans", sans-serif;
}
.filter svg { position: absolute; right: 5px; top: 11px; width: 9px; height: 6px; color: #3c3c3c; }

/* Workspace */
.workspace { flex: 1; min-height: 0; display: flex; }

.navigator {
  position: relative;
  flex: none;
  width: 313px;
  display: flex;
  flex-direction: column;
  padding: 5px 12px 0 0;
  background: #d1e1ec;
}
.tabs { display: flex; height: 31px; padding-left: 9px; }
.tab { position: relative; width: 62px; margin-right: -10px; }
.tab-active { z-index: 1; }
.tab-shape { position: absolute; inset: 0; width: 100%; height: 100%; }
.tab-icon { position: relative; display: block; width: 24px; height: 24px; margin: 0 0 0 15px; }
.panel {
  flex: 1;
  min-height: 0;
  display: flex;
  flex-direction: column;
  padding: 0 9px;
  border-top: 1px solid #93aab8;
  border-right: 1px solid #b4c6d2;
  border-radius: 0 6px 0 0;
  background: linear-gradient(100deg, #f4f9fc, #d4e2ec 70%);
}
.panel-head { display: flex; align-items: center; height: 38px; padding: 0 0 3px 22px; }
.panel-head h2 { flex: 1; margin: 0; font-size: 15px; line-height: 18px; color: #484f55; }
.panel-btn { display: flex; align-items: center; gap: 5px; margin-right: 2px; color: #15191c; }
.panel-btn + .panel-btn { margin-left: 9px; }
.ico { width: 24px; height: 24px; }
.arr { width: 9px; height: 6px; }
.tree {
  flex: 1;
  padding: 1px 6px;
  border: 1px solid #7c98a8;
  border-bottom: 0;
  border-radius: 5px 5px 0 0;
  background: #fff;
  font: 14px/22px "Open Sans", "Noto Sans", sans-serif;
}
.root { display: flex; align-items: center; gap: 6px; height: 22px; }
.root svg { width: 17px; height: 17px; }
.tree ul { position: relative; margin: 0; padding: 0; list-style: none; }
.tree ul::before {
  content: "";
  position: absolute;
  left: 9px;
  top: 0;
  bottom: 11px;
  border-left: 1px dotted #a4acb2;
}
.tree li {
  position: relative;
  display: flex;
  align-items: center;
  gap: 5px;
  height: 22px;
  padding-left: 24px;
}
.tree li.datum { height: 23px; }
.tree li::before {
  content: "";
  position: absolute;
  left: 10px;
  top: 11px;
  width: 13px;
  border-top: 1px dotted #a4acb2;
}
.tree li svg { width: 19px; height: 19px; }
.toggle {
  position: absolute;
  left: 4px;
  top: 6px;
  width: 11px;
  height: 11px;
  border: 1px solid #a4bccc;
  border-radius: 2px;
  background:
    linear-gradient(#30404c, #30404c) center / 7px 1px no-repeat,
    linear-gradient(#30404c, #30404c) center / 1px 7px no-repeat,
    #e4f0f8;
}

.sashes {
  position: absolute;
  top: 308px;
  right: 0;
  display: grid;
  gap: 12px;
}
.sash {
  width: 11px;
  height: 117px;
  border: 1px solid #bccfdb;
  border-right: 0;
  border-radius: 4px 0 0 4px;
  background: radial-gradient(circle, #4a5860 2px, transparent 3px), #d1e2ea;
}
.sash-strong { height: 115px; border: 2px solid #8d9ea8; border-right: 0; }

.viewport {
  flex: 1;
  min-width: 0;
  background: linear-gradient(#c5dbec, #adc7e0 25%, #8eaacd 55%, #6080ae);
}
.scene { display: block; width: 100%; height: 100%; }
.tag-box { fill: #a6bfda; }
.tag { font: 14px "Liberation Sans", Arial, sans-serif; fill: #7c7476; }
.watermark {
  font: 61px "Liberation Serif", "Times New Roman", serif;
  fill: #e4e6e2;
  text-shadow: 1px 1px 1px #4c4a40;
}
.watermark-cjk { font: 300 72px "Noto Sans CJK SC", sans-serif; }

/* Feature toolbar */
.features {
  flex: none;
  display: flex;
  width: 81px;
  padding-top: 5px;
  overflow: hidden;
  background: #dbe9f2;
}
.col { flex: none; width: 51px; }
.stack { display: grid; gap: 3px; padding-left: 2px; }
.hgrip {
  display: block;
  height: 5px;
  margin: 5px 1px 10px 0;
  background:
    linear-gradient(transparent 2px, #dbe9f2 2px 3px, transparent 3px),
    repeating-linear-gradient(90deg, #8aa2b6 0 1px, #dbe9f2 1px 2px);
}
.hgrip:first-child { margin-top: 0; }
.with-flyout { display: flex; align-items: center; gap: 6px; }
.flyout {
  width: 0;
  height: 0;
  border-left: 6px solid #2c3438;
  border-top: 4px solid transparent;
  border-bottom: 4px solid transparent;
}
```
